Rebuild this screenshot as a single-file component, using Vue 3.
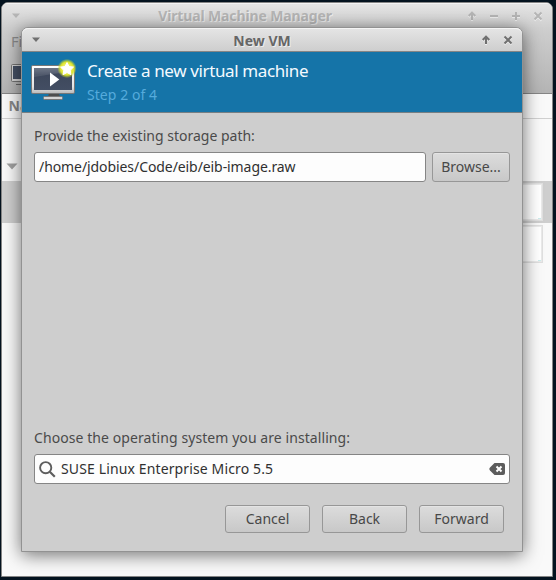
<script setup>
const buttons = ['Cancel', 'Back', 'Forward']
</script>

<template>
  <div class="desktop">
    <section class="manager">
      <header class="manager-title">
        <svg class="menu-arrow" width="10" height="6" viewBox="0 0 10 6"><path d="M1 0.5h8L5 5z" fill="currentColor" /></svg>
        <h2>Virtual Machine Manager</h2>
        <div class="manager-controls">
          <svg viewBox="0 0 10 10"><path d="M5 9V2M1.7 5L5 1.7 8.3 5" /></svg>
          <svg viewBox="0 0 10 10"><path d="M1 5h8" /></svg>
          <svg viewBox="0 0 10 10"><path d="M1 5h8M5 1v8" /></svg>
          <svg viewBox="0 0 10 10"><path d="M1.5 1.5l7 7M8.5 1.5l-7 7" /></svg>
        </div>
      </header>
      <div class="manager-tools">
        <span class="file">File</span>
        <svg width="28" height="22" viewBox="0 0 28 22">
          <rect x="0.5" y="0.5" width="27" height="17" rx="1" fill="#d5d5d5" stroke="#737373" />
          <rect x="2" y="2" width="24" height="13" fill="#455064" />
          <path d="M9 18h10v2H5v1h18v-1z" fill="#666" />
        </svg>
      </div>
      <div class="column-head">Name</div>
      <div class="group-row">
        <svg width="12" height="7" viewBox="0 0 12 7"><path d="M0.5 0.5h11L6 6.5z" fill="#a0a0a0" /></svg>
      </div>
      <div class="vm-row selected"><div class="graph"><i /></div></div>
      <div class="vm-row"><div class="graph"><i /></div></div>
    </section>

    <section class="dialog">
      <header class="dialog-title">
        <svg class="menu-arrow" width="10" height="6" viewBox="0 0 10 6"><path d="M1 0.5h8L5 5z" fill="currentColor" /></svg>
        <h2>New VM</h2>
        <div class="dialog-controls">
          <svg viewBox="0 0 10 10"><path d="M5 9V2M1.7 5L5 1.7 8.3 5" /></svg>
          <svg viewBox="0 0 10 10"><path d="M1.5 1.5l7 7M8.5 1.5l-7 7" /></svg>
        </div>
      </header>
      <div class="banner">
        <svg class="vm-icon" width="48" height="48" viewBox="0 0 48 48">
          <defs>
            <linearGradient id="frame" x2="0" y2="1"><stop stop-color="#fff" /><stop offset=".75" stop-color="#e4e4e4" /><stop offset="1" stop-color="#b9b9b9" /></linearGradient>
            <linearGradient id="screen" x2="0" y2="1"><stop stop-color="#5e6779" /><stop offset=".3" stop-color="#3e485c" /><stop offset="1" stop-color="#434e63" /></linearGradient>
            <radialGradient id="glow"><stop offset=".4" stop-color="#f0f06a" /><stop offset=".68" stop-color="#dbe32b" /><stop offset="1" stop-color="#b9d130" stop-opacity="0" /></radialGradient>
          </defs>
          <path d="M18 36h10l1 4H17z" fill="#4d4d4d" />
          <rect x="12.5" y="39.5" width="19" height="3" rx="1" fill="#d4d4d4" stroke="#777" />
          <rect x="0.5" y="8.5" width="43" height="28" rx="1.3" fill="url(#frame)" stroke="#777" />
          <rect x="3" y="11" width="38" height="22" fill="url(#screen)" />
          <path d="M3 11h38v3L3 20z" fill="#fff" opacity=".1" />
          <path d="M19 15.5v14L28.3 22.5z" fill="#fff" />
          <circle cx="36" cy="11.5" r="9.7" fill="url(#glow)" />
          <path d="M36 5.5l2 4 4.5.6-3.3 3.2.8 4.4-4-2.2-4 2.2.8-4.4-3.3-3.2 4.5-.6z" fill="#fff" stroke="#fff" stroke-linejoin="round" />
        </svg>
        <div class="banner-text">
          <h1>Create a new virtual machine</h1>
          <p>Step 2 of 4</p>
        </div>
      </div>
      <div class="content">
        <div class="label">Provide the existing storage path:</div>
        <div class="path-row">
          <div class="entry path">/home/jdobies/Code/eib/eib-image.raw</div>
          <div class="button browse">Browse...</div>
        </div>
        <div class="label os-label">Choose the operating system you are installing:</div>
        <div class="entry search">
          <svg width="17" height="17" viewBox="0 0 17 17" fill="none" stroke="#5d5d5d"><circle cx="6.7" cy="6.7" r="5.6" stroke-width="1.9" /><path d="M10.8 10.8l5 5" stroke-width="2.2" /></svg>
          <span>SUSE Linux Enterprise Micro 5.5</span>
          <svg class="clear" width="16" height="12" viewBox="0 0 16 12"><path d="M5.5 0H14a2 2 0 0 1 2 2v8a2 2 0 0 1-2 2H5.5L1 7.5Q-.3 6 1 4.5z" fill="#5c5c5c" /><path d="M7.5 3.5l5 5M12.5 3.5l-5 5" stroke="#fff" stroke-width="2" /></svg>
        </div>
        <div class="actions">
          <div v-for="name in buttons" :key="name" class="button">{{ name }}</div>
        </div>
      </div>
    </section>
  </div>
</template>

<style>
body { margin: 0; background: #04131f; }
</style>
<style scoped>
* { box-sizing: border-box; }
h1, h2, p { margin: 0; font-weight: 400; }
svg { display: block; flex: none; }
.desktop {
  position: relative; width: 556px; height: 580px; overflow: hidden;
  background: #04131f; color: #4a4a4a;
  font: 14px/20px "Noto Sans", sans-serif;
}
.manager {
  position: absolute; left: 1px; top: 2px; width: 552px; height: 575px;
  overflow: hidden; border: 1px solid #858585; border-radius: 7px 7px 0 0; background: #f9f9f9;
}
.manager-title {
  display: flex; align-items: center; height: 26px; padding: 0 9px;
  color: #b5b5b5; background: linear-gradient(#e5e5e5, #cecece); box-shadow: inset 0 1px #f4f4f4;
}
.manager-title h2, .dialog-title h2 {
  flex: 1; text-align: center; font-size: 14px; font-weight: 700; text-shadow: 1px 1px #eee;
}
.manager-title h2 { padding-left: 2px; letter-spacing: -0.13px; }
.manager-controls, .dialog-controls { display: flex; gap: 12px; }
.manager-controls svg, .dialog-controls svg {
  width: 10px; height: 10px; fill: none; stroke: currentColor; stroke-width: 2;
  filter: drop-shadow(0 1px #eee);
}
.manager-tools {
  height: 65px; padding: 3px 0 0 9px; border-bottom: 1px solid #858585;
  background: linear-gradient(#cecece, #b4b4b4); color: #8b8b8b;
}
.manager-tools .file { display: block; height: 32px; line-height: 18px; font-size: 14.5px; }
.column-head { height: 25px; padding-left: 6.5px; border-bottom: 1px solid #d0d0d0; font-weight: 700; line-height: 24px; color: #888; }
.group-row { height: 62px; padding: 44px 0 0 4px; }
.vm-row { display: flex; justify-content: flex-end; height: 42px; padding: 2px 9px 2px 0; }
.vm-row.selected { background: #cecece; }
.graph { display: flex; align-items: flex-end; justify-content: flex-end; width: 80px; height: 38px; padding: 1px; border: 1px solid #dfdfdf; outline: 1px solid #eaeaea; outline-offset: -2px; background: #fff; }
.graph i { width: 3px; height: 1px; background: #cceded; }
.dialog {
  position: absolute; left: 21px; top: 27px; width: 502px; height: 525px;
  display: flex; flex-direction: column; border: 1px solid #929292; border-radius: 7px 7px 0 0;
  background: #cecece; box-shadow: 0 3px 18px rgba(0, 0, 0, .55);
}
.dialog-title {
  display: flex; align-items: center; height: 24px; padding: 0 9px; flex: none;
  border-bottom: 1px solid #858585; border-radius: 6px 6px 0 0; color: #707070;
  background: linear-gradient(#e5e5e5, #cecece); box-shadow: inset 0 1px #f4f4f4;
}
.dialog-title h2 { padding: 2px 0 0 2px; color: #666; }
.banner { display: flex; height: 61px; flex: none; padding: 0 0 0 9px; border-bottom: 1px solid #777f83; background: #1574a8; }
.vm-icon { margin-top: 5px; }
.banner-text { padding: 7px 0 0 8px; }
h1 { color: #f4faff; font-size: 17px; letter-spacing: -0.38px; line-height: 24px; white-space: nowrap; }
.banner p { color: #55abdc; font-size: 14px; letter-spacing: 0.05px; line-height: 24px; }
.content { display: flex; flex: 1; flex-direction: column; padding: 13px 12px 18px; }
.label { height: 20px; font-size: 14px; white-space: nowrap; }
.path-row { display: flex; gap: 6px; margin-top: 6px; }
.entry { height: 30px; border: 1px solid #858585; border-radius: 3px; background: #fdfdfd; color: #303030; line-height: 27px; white-space: nowrap; }
.path { flex: 1; padding-left: 4px; letter-spacing: -0.08px; }
.button {
  display: flex; align-items: center; justify-content: center; width: 85px; height: 28px;
  border: 1px solid #979797; border-radius: 3px; background: linear-gradient(#dcdcdc, #c8c8c8);
  box-shadow: inset 0 1px #e4e4e4; color: #484848;
}
.browse { width: 78px; height: 30px; }
.os-label { margin-top: auto; letter-spacing: 0.075px; }
.search { display: flex; align-items: center; flex: none; margin-top: 6px; padding: 0 4px; }
.search span { flex: 1; padding-left: 5px; line-height: 26px; letter-spacing: 0.13px; }
.actions { display: flex; justify-content: flex-end; gap: 12px; margin-top: 21px; padding-right: 6px; }
</style>
